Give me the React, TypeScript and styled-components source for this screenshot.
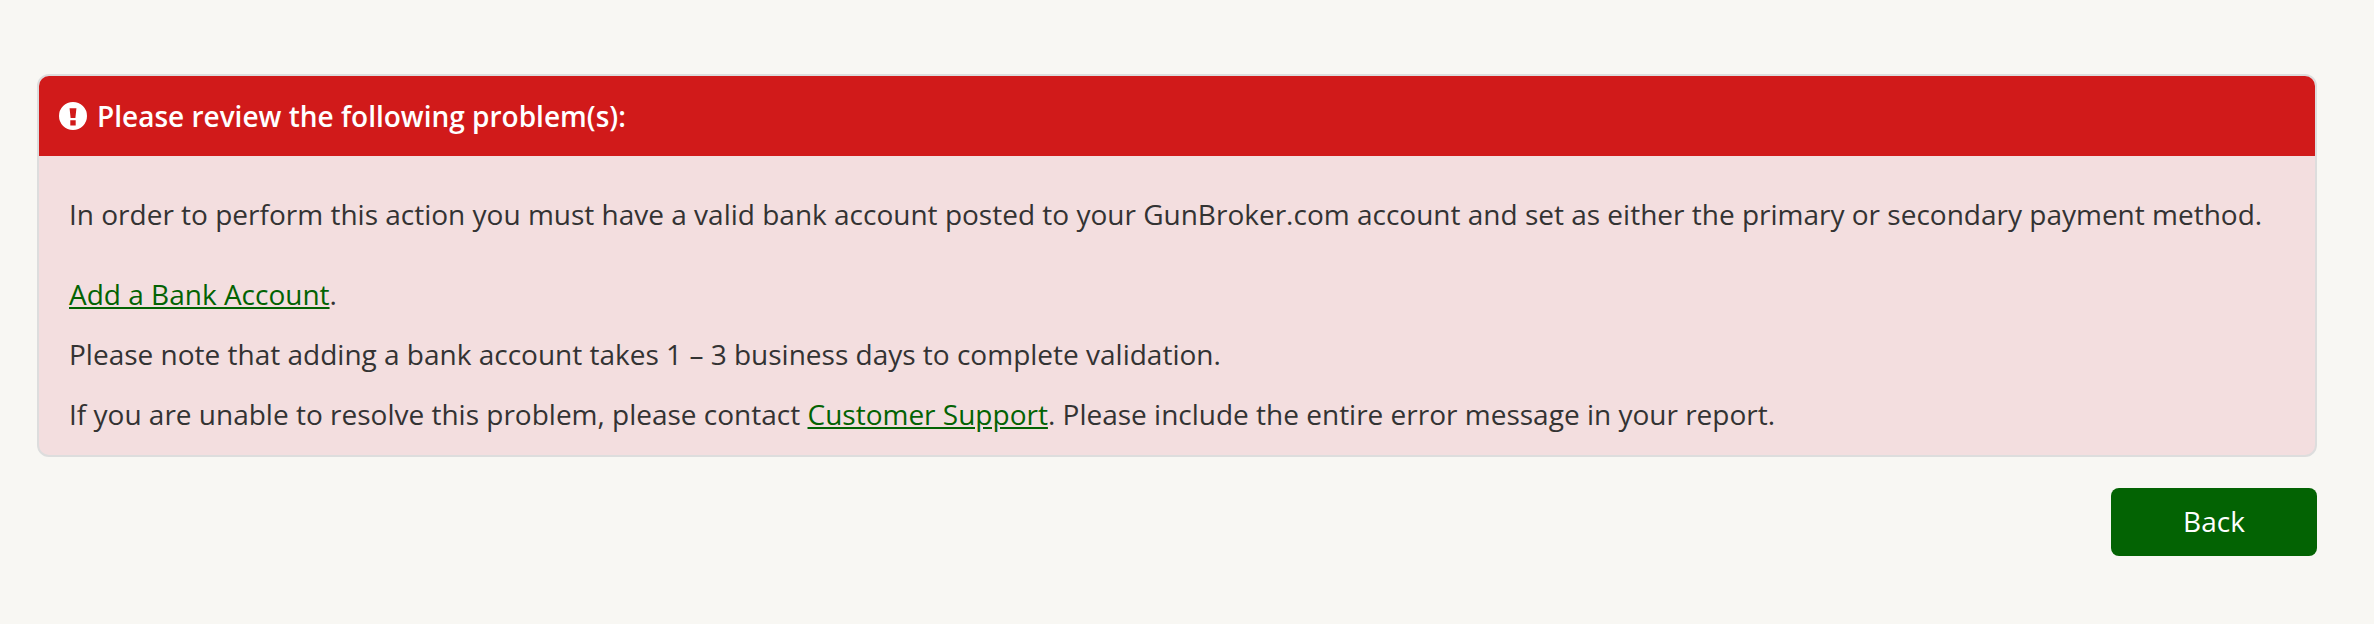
import * as React from "react";
import styled, { createGlobalStyle } from "styled-components";

const GlobalStyle = createGlobalStyle`
    html, body {
        margin: 0;
        padding: 0;
        background-color: #f8f7f3;
        font-family: "Open Sans", "Liberation Sans", sans-serif;
    }
`;

const Page = styled.main`
    box-sizing: border-box;
    width: 2374px;
    height: 624px;
    padding: 74px 57px 0 37px;
`;

const ErrorPanel = styled.section`
    border: 2px solid #dddddd;
    border-radius: 12px;
    background-color: #f3dedf;
    overflow: hidden;
`;

const ErrorHeader = styled.h2`
    display: flex;
    align-items: center;
    gap: 10px;
    margin: 0;
    height: 80px;
    padding: 0 20px;
    background-color: #d11a1a;
    color: #ffffff;
    font-size: 28px;
    font-weight: 600;
`;

const ErrorBody = styled.div`
    padding: 37px 30px 2px 30px;
`;

const Message = styled.p<{ $gap?: number }>`
    margin: 0 0 ${(props) => props.$gap ?? 18}px 0;
    color: #333333;
    font-size: 28px;
    line-height: 42px;
`;

const GreenLink = styled.a`
    color: #036303;
    text-decoration: underline;
`;

const Actions = styled.div`
    display: flex;
    justify-content: flex-end;
    margin-top: 31px;
`;

const BackButton = styled.button`
    width: 206px;
    height: 68px;
    padding: 0 0 2px 0;
    border: none;
    border-radius: 8px;
    background-color: #036303;
    color: #ffffff;
    font-family: inherit;
    font-size: 28px;
`;

function AlertIcon() {
    return (
        <svg width="28" height="28" viewBox="0 0 27 27" aria-hidden="true">
            <path
                fill="#ffffff"
                fillRule="evenodd"
                d="M13.5 0a13.5 13.5 0 1 0 0 27a13.5 13.5 0 1 0 0-27zM10.2 6h6.6l-1 9.5h-4.6zM10.9 17.5h5.2v5.2h-5.2z"
            />
        </svg>
    );
}

export default function App() {
    return (
        <Page>
            <GlobalStyle />
            <ErrorPanel>
                <ErrorHeader>
                    <AlertIcon />
                    Please review the following problem(s):
                </ErrorHeader>
                <ErrorBody>
                    <Message $gap={38}>
                        In order to perform this action you must have a valid bank account posted to your GunBroker.com account and set as either the primary or secondary payment method.
                    </Message>
                    <Message>
                        <GreenLink href="#">Add a Bank Account</GreenLink>.
                    </Message>
                    <Message>Please note that adding a bank account takes 1 – 3 business days to complete validation.</Message>
                    <Message>
                        If you are unable to resolve this problem, please contact <GreenLink href="#">Customer Support</GreenLink>. Please include the entire error message in your report.
                    </Message>
                </ErrorBody>
            </ErrorPanel>
            <Actions>
                <BackButton>Back</BackButton>
            </Actions>
        </Page>
    );
}
